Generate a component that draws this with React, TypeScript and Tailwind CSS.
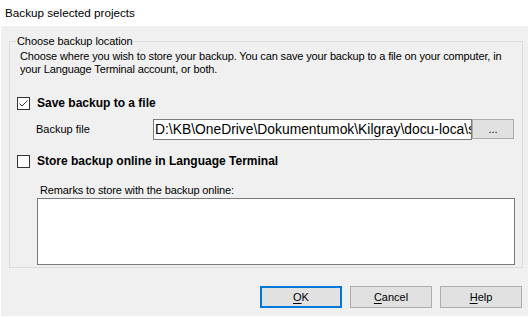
import React from 'react'

const Checkbox: React.FC<{ checked?: boolean }> = ({ checked }) => (
    <svg width="13" height="13" viewBox="0 0 13 13" className="shrink-0">
        <rect x="0.5" y="0.5" width="12" height="12" fill="#ffffff" stroke="#333333" />
        {checked && <path d="M2.5 6.5 L5 9 L10.5 3.5" fill="none" stroke="#333333" strokeWidth="1" />}
    </svg>
)

const DialogButton: React.FC<{ label: string; focused?: boolean }> = ({ label, focused }) => (
    <button
        className={`w-[82px] h-[22px] bg-[#e1e1e1] text-[11px] text-black flex items-center justify-center ${
            focused ? 'border-2 border-[#0078d7]' : 'border border-[#adadad]'
        }`}
    >
        <span className="underline underline-offset-2">{label[0]}</span>
        {label.slice(1)}
    </button>
)

export default function App() {
    return (
        <div className="w-[529px] h-[317px] bg-white flex flex-col font-['Liberation_Sans',Arial,sans-serif] text-black overflow-hidden">
            {/* Title bar */}
            <div className="h-[26px] shrink-0 flex items-center pl-[5px] text-[11.7px]">Backup selected projects</div>

            {/* Dialog body */}
            <div className="flex-1 mx-[1px] mb-[1px] bg-[#f0f0f0] flex flex-col pl-[8px] pt-[9px] text-[11px] leading-[13px]">
                <fieldset className="w-[514px] border border-[#dcdcdc] pb-[2px] flex flex-col">
                    <legend className="ml-[6px] px-[1px] leading-[13px] tracking-[-0.08px]">Choose backup location</legend>

                    <p className="ml-[10px] mt-[2px] whitespace-nowrap tracking-[-0.14px]">
                        Choose where you wish to store your backup. You can save your backup to a file on your computer, in
                        <br />
                        your Language Terminal account, or both.
                    </p>

                    <label className="ml-[7px] mt-[21px] h-[13px] flex items-center gap-[7px] font-bold text-[12px]">
                        <Checkbox checked />
                        <span>Save backup to a file</span>
                    </label>

                    <div className="ml-[26px] mt-[9px] flex items-start">
                        <span className="w-[117px] h-[21px] flex items-center">Backup file</span>
                        <div className="w-[319px] h-[21px] border border-[#7a7a7a] bg-white flex items-center pl-[1px] overflow-hidden whitespace-nowrap text-[13.85px]">
                            D:\KB\OneDrive\Dokumentumok\Kilgray\docu-loca\sa
                        </div>
                        <button className="w-[42px] h-[20px] bg-[#e1e1e1] border border-[#adadad] text-[11px] leading-[10px] flex items-center justify-center">
                            ...
                        </button>
                    </div>

                    <label className="ml-[7px] mt-[15px] h-[13px] flex items-center gap-[7px] font-bold text-[12px]">
                        <Checkbox />
                        <span>Store backup online in Language Terminal</span>
                    </label>

                    <span className="ml-[30px] mt-[16px] tracking-[-0.12px]">Remarks to store with the backup online:</span>
                    <div className="ml-[27px] mt-[1px] w-[478px] h-[67px] border border-[#7a7a7a] bg-white" />
                </fieldset>

                <div className="mt-[18px] pr-[6px] flex justify-end gap-[8px]">
                    <DialogButton label="OK" focused />
                    <DialogButton label="Cancel" />
                    <DialogButton label="Help" />
                </div>
            </div>
        </div>
    )
}
